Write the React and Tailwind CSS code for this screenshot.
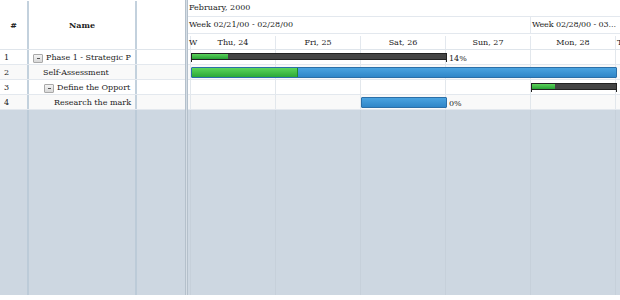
const rows = [
  { n: 1, name: 'Phase 1 - Strategic P', indent: 4, toggle: true },
  { n: 2, name: 'Self-Assessment', indent: 14, toggle: false },
  { n: 3, name: 'Define the Opport', indent: 15, toggle: true },
  { n: 4, name: 'Research the mark', indent: 25, toggle: false },
];

const days = ['Thu, 24', 'Fri, 25', 'Sat, 26', 'Sun, 27', 'Mon, 28'];

function Toggle() {
  return (
    <span className="mr-[3px] flex h-[9px] w-[10px] items-center justify-center rounded-[1px] border border-[#a9a9a9] bg-gradient-to-b from-[#f4f4f4] to-[#d8d8d8]">
      <span className="h-px w-[3px] bg-[#555]" />
    </span>
  );
}

function SummaryBar({ left, width, done }) {
  return (
    <div className="absolute top-[3px] h-[9px]" style={{ left, width }}>
      <div className="flex h-[7px] w-full overflow-hidden border border-[#222] bg-[#444]">
        <div className="h-full bg-gradient-to-b from-[#5bd35b] to-[#27a335]" style={{ width: done }} />
      </div>
      <div className="absolute left-0 top-0 h-[9px] w-px bg-[#222]" />
      <div className="absolute right-0 top-0 h-[9px] w-px bg-[#222]" />
    </div>
  );
}

function TaskBar({ left, width, done }) {
  return (
    <div
      className="absolute top-[2px] flex h-[11px] overflow-hidden rounded-[1px] border border-[#2b6fa8] bg-gradient-to-b from-[#4aa3e0] to-[#2f86c8]"
      style={{ left, width }}
    >
      {done > 0 ? (
        <div className="h-full border-r border-[#1f8a2d] bg-gradient-to-b from-[#5ad65a] to-[#2aa838]" style={{ width: done }} />
      ) : null}
    </div>
  );
}

function DayLines() {
  return (
    <div className="absolute inset-0 flex">
      <div className="w-[3px] shrink-0 border-r border-[#e2e7ec]" />
      {days.map((d) => (
        <div key={d} className="w-[85px] shrink-0 border-r border-[#e2e7ec]" />
      ))}
    </div>
  );
}

export default function App() {
  return (
    <div
      className="h-[300px] w-[620px] overflow-hidden bg-white text-[8px] text-[#222]"
      style={{ fontFamily: '"DejaVu Serif", serif' }}
    >
      <div className="flex h-[295px]">
        {/* left grid */}
        <div className="flex w-[185px] shrink-0 flex-col bg-[#cdd7e1]">
          <div className="flex h-[50px] border-b border-[#dfe5eb] bg-white pt-px font-bold">
            <div className="flex w-[29px] items-center justify-center border-r-2 border-[#c3d1dd]">#</div>
            <div className="flex w-[108px] items-center justify-center border-r-2 border-[#c3d1dd]">Name</div>
            <div className="flex-1" />
          </div>
          {rows.map((r, i) => (
            <div
              key={r.n}
              className={`flex h-[15px] border-b border-[#e3e8ee] ${i % 2 ? 'bg-[#f9f9f9]' : 'bg-white'}`}
            >
              <div className="flex w-[29px] items-center border-r-2 border-[#c3d1dd] pl-[4px] pt-[2px]">{r.n}</div>
              <div
                className="flex w-[108px] items-center overflow-hidden whitespace-nowrap border-r-2 border-[#c3d1dd] pt-[2px]"
                style={{ paddingLeft: r.indent }}
              >
                {r.toggle ? <Toggle /> : null}
                {r.name}
              </div>
              <div className="flex-1" />
            </div>
          ))}
          <div className="flex flex-1">
            <div className="w-[29px] border-r-2 border-[#bccbd8]" />
            <div className="w-[108px] border-r-2 border-[#bccbd8]" />
            <div className="flex-1" />
          </div>
        </div>

        {/* splitter */}
        <div className="w-[3px] shrink-0 border-x border-[#b4c0cb] bg-[#d5dde5]" />

        {/* chart */}
        <div className="flex min-w-0 flex-1 flex-col overflow-hidden bg-[#cdd7e1]">
          <div className="h-[50px] shrink-0 bg-white">
            <div className="flex h-[17px] items-center border-b border-[#e3e8ee] pl-[1px] whitespace-nowrap">
              February, 2000
            </div>
            <div className="flex h-[17px] border-b border-[#e3e8ee] whitespace-nowrap">
              <div className="flex w-[343px] shrink-0 items-center border-r border-[#e3e8ee] pl-[1px]">
                Week 02/21/00 - 02/28/00
              </div>
              <div className="flex w-[89px] shrink-0 items-center pl-[1px] tracking-[-0.1px]">
                Week 02/28/00 - 03...
              </div>
            </div>
            <div className="flex h-[16px] border-b border-[#dfe5eb] pt-[2px] whitespace-nowrap">
              <div className="relative w-[3px] shrink-0 border-r border-[#e3e8ee]">
                <span className="absolute left-[1px] top-[1px]">W</span>
              </div>
              {days.map((d) => (
                <div key={d} className="flex w-[85px] shrink-0 items-center justify-center border-r border-[#e3e8ee]">
                  {d}
                </div>
              ))}
              <div className="flex items-center pl-[1px]">T</div>
            </div>
          </div>

          {rows.map((r, i) => (
            <div
              key={r.n}
              className={`relative h-[15px] shrink-0 border-b border-[#e3e8ee] ${i % 2 ? 'bg-[#f9f9f9]' : 'bg-white'}`}
            >
              <DayLines />
              {r.n === 1 ? (
                <>
                  <SummaryBar left={3} width={256} done={36} />
                  <span className="absolute left-[261px] top-[3px]">14%</span>
                </>
              ) : null}
              {r.n === 2 ? <TaskBar left={3} width={426} done={106} /> : null}
              {r.n === 3 ? <SummaryBar left={343} width={86} done={23} /> : null}
              {r.n === 4 ? (
                <>
                  <TaskBar left={173} width={86} done={0} />
                  <span className="absolute left-[261px] top-[3px]">0%</span>
                </>
              ) : null}
            </div>
          ))}

          <div className="relative flex-1">
            <div className="absolute inset-0 flex">
              <div className="w-[3px] shrink-0 border-r border-[#c6d0da]" />
              {days.map((d) => (
                <div key={d} className="w-[85px] shrink-0 border-r border-[#c6d0da]" />
              ))}
            </div>
          </div>
        </div>
      </div>
    </div>
  );
}
